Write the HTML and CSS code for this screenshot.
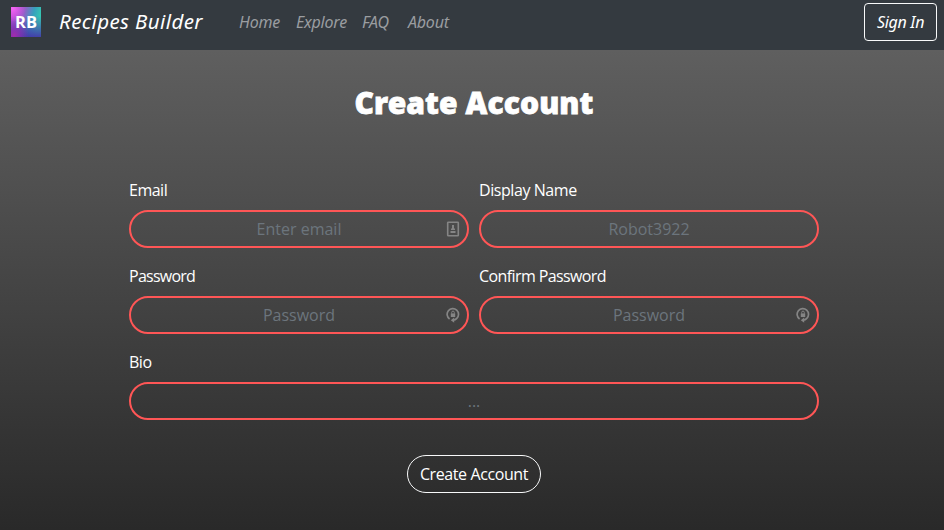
FILE: index.html
```html
<!DOCTYPE html>
<html lang="en">
<head>
<meta charset="utf-8">
<title>Recipes Builder</title>
<link rel="stylesheet" href="styles.css">
</head>
<body>
<header class="navbar">
  <svg class="logo" viewBox="0 0 30 30" role="img" aria-label="RB">
    <defs>
      <linearGradient id="base" x1="0" y1="0" x2="1" y2="0.25"><stop offset="0" stop-color="#cf49df"/><stop offset=".45" stop-color="#9360c8"/><stop offset=".75" stop-color="#389fbd"/><stop offset="1" stop-color="#35c7b2"/></linearGradient>
      <linearGradient id="shade" x1="0" y1="0" x2="0" y2="1"><stop offset=".3" stop-color="#4431a8" stop-opacity="0"/><stop offset="1" stop-color="#4431a8" stop-opacity=".9"/></linearGradient>
      <radialGradient id="pink" cx=".05" cy=".05" r=".45"><stop offset="0" stop-color="#f468f4"/><stop offset="1" stop-color="#e050e8" stop-opacity="0"/></radialGradient>
      <radialGradient id="plum" cx=".1" cy=".95" r=".5"><stop offset="0" stop-color="#a32cae"/><stop offset="1" stop-color="#8330b0" stop-opacity="0"/></radialGradient>
    </defs>
    <rect width="30" height="30" fill="url(#base)"/>
    <rect width="30" height="30" fill="url(#shade)"/>
    <rect width="30" height="30" fill="url(#pink)"/>
    <rect width="30" height="30" fill="url(#plum)"/>
    <text class="logo-text" x="15" y="21" text-anchor="middle">RB</text>
  </svg>
  <a class="brand">Recipes Builder</a>
  <nav class="links">
    <a class="home">Home</a><a class="explore">Explore</a><a class="faq">FAQ</a><a class="about">About</a>
  </nav>
  <button class="sign-in">Sign In</button>
</header>
<main>
  <h1>Create Account</h1>
  <form class="form">
    <div class="field">
      <label class="l-email" for="email">Email</label>
      <div class="control">
        <input id="email" type="email" placeholder="Enter email">
        <svg class="hint" viewBox="0 0 14 16"><rect x="1.7" y="1.2" width="10.6" height="13.6" rx=".6" fill="none" stroke="currentColor" stroke-width="1.6"/><path d="M6 4h2v3l1 1v1H5V8l1-1zM4.5 10h5v2h-5z" fill="currentColor"/></svg>
      </div>
    </div>
    <div class="field">
      <label class="l-name" for="name">Display Name</label>
      <div class="control"><input id="name" type="text" placeholder="Robot3922"></div>
    </div>
    <div class="field">
      <label class="l-pass" for="pass">Password</label>
      <div class="control">
        <input id="pass" type="password" placeholder="Password">
        <svg class="hint" viewBox="0 0 14 16"><path d="M3.6 12A5.7 5.7 0 1 1 10.8 11.4Q9.4 13 7 13.2" fill="none" stroke="currentColor" stroke-width="1.7"/><path d="M8.2 10.6v5.2L4.8 13.2z" fill="currentColor"/><path d="M4.8 6.4h4.4v3.6H4.8z" fill="currentColor"/><path d="M5.7 6.6V5.4a1.3 1.3 0 0 1 2.6 0v1.2" fill="none" stroke="currentColor"/></svg>
      </div>
    </div>
    <div class="field">
      <label class="l-confirm" for="confirm">Confirm Password</label>
      <div class="control">
        <input id="confirm" type="password" placeholder="Password">
        <svg class="hint" viewBox="0 0 14 16"><path d="M3.6 12A5.7 5.7 0 1 1 10.8 11.4Q9.4 13 7 13.2" fill="none" stroke="currentColor" stroke-width="1.7"/><path d="M8.2 10.6v5.2L4.8 13.2z" fill="currentColor"/><path d="M4.8 6.4h4.4v3.6H4.8z" fill="currentColor"/><path d="M5.7 6.6V5.4a1.3 1.3 0 0 1 2.6 0v1.2" fill="none" stroke="currentColor"/></svg>
      </div>
    </div>
    <div class="field wide">
      <label class="l-bio" for="bio">Bio</label>
      <div class="control"><input id="bio" type="text" placeholder="..."></div>
    </div>
    <button class="submit" type="button">Create Account</button>
  </form>
</main>
</body>
</html>
```
FILE: styles.css
```css
* { box-sizing: border-box; }
body {
  margin: 0;
  height: 530px;
  overflow: hidden;
  display: flex;
  flex-direction: column;
  font: 16px/24px "Open Sans", "Noto Sans", sans-serif;
  color: #fff;
}
.navbar {
  height: 50px;
  flex: none;
  display: flex;
  align-items: flex-start;
  padding: 3px 7px 0 11px;
  background: #343a40;
  font-family: "Noto Sans", sans-serif;
  font-style: italic;
  white-space: nowrap;
}
.logo { width: 30px; height: 30px; margin-top: 4px; flex: none; }
.logo-text { font: bold 16.5px "Open Sans", sans-serif; fill: #fff; }
.brand { width: 180px; margin-left: 18px; font-size: 20.5px; line-height: 37px; letter-spacing: 0.4px; }
.links { display: flex; line-height: 38px; color: #9a9da0; }
.links a { letter-spacing: -0.2px; }
.home { width: 57px; }
.explore { width: 66px; }
.faq { width: 46px; }
.sign-in {
  margin-left: auto;
  width: 73px;
  height: 38px;
  padding: 0;
  border: 1px solid #f8f9fa;
  border-radius: 4px;
  background: none;
  color: #fff;
  font: inherit;
  letter-spacing: -0.3px;
}
main {
  flex: 1;
  background: linear-gradient(#5f5f5f, #292929);
  padding: 33px 125px 0 129px;
}
h1 {
  margin: 0 0 55px;
  font: 900 30px/40px "Noto Sans", "Open Sans", sans-serif;
  letter-spacing: 0.1px;
  -webkit-text-stroke: 0.8px #fff;
  text-align: center;
}
.form { display: grid; grid-template-columns: 340px 340px; gap: 16px 10px; }
.wide { grid-column: 1 / -1; }
label { display: block; margin-bottom: 8px; letter-spacing: -0.5px; }
.l-name { letter-spacing: -0.43px; }
.l-pass { letter-spacing: -0.75px; }
.l-confirm { letter-spacing: -0.6px; }
.control { position: relative; }
input {
  display: block;
  width: 100%;
  height: 38px;
  padding: 6px 12px;
  border: 2px solid #ff5656;
  border-radius: 19px;
  background: none;
  color: #fff;
  text-align: center;
  font: 16px/24px "Open Sans", "Noto Sans", sans-serif;
}
input::placeholder { color: #6c757d; opacity: 1; }
.hint { position: absolute; right: 9px; top: 11px; width: 14px; height: 16px; color: #858585; }
.submit {
  grid-column: 1 / -1;
  justify-self: center;
  width: 134px;
  height: 38px;
  margin-top: 19px;
  padding: 0;
  border: 1px solid #f8f9fa;
  border-radius: 19px;
  background: none;
  color: #fff;
  font: inherit;
  letter-spacing: -0.4px;
}
```
